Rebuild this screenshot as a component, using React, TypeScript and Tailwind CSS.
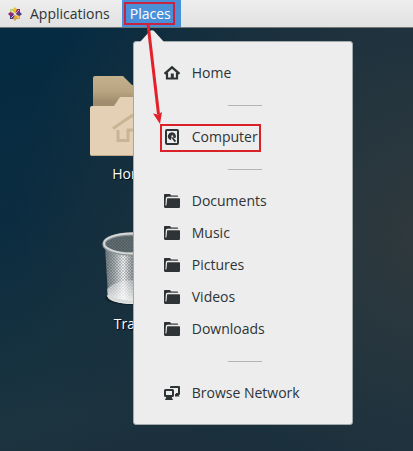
import type { ReactNode } from "react";

const icon = "h-4 w-4 shrink-0 text-[#2e3436]";

function HomeIcon() {
  return (
    <svg viewBox="0 0 16 16" className={icon} aria-hidden="true">
      <path d="M0.5 8.800 8 2.300l7.500 6.500" fill="none" stroke="currentColor" strokeWidth="2.200" />
      <path d="M3 7.500V13.500h10V7.500" fill="none" stroke="currentColor" strokeWidth="2.200" />
      <path d="M6.800 8.500h3V14h-3z" fill="currentColor" />
    </svg>
  );
}

function DiskIcon() {
  return (
    <svg viewBox="0 0 16 16" className={icon} aria-hidden="true">
      <rect x="2" y="1" width="12" height="14" rx="1" fill="none" stroke="currentColor" strokeWidth="2" />
      <path d="M8 3.200a4 4 0 0 0-2.500 7.200L7 11l.5-2.500 4 .5A4 4 0 0 0 8 3.200z" fill="currentColor" />
      <circle cx="8.300" cy="7.200" r="1" fill="#ededed" />
      <path d="M8.600 9 11.400 12.600" stroke="currentColor" strokeWidth="1.800" />
    </svg>
  );
}

function FolderIcon() {
  return (
    <svg viewBox="0 0 16 16" className={icon} aria-hidden="true">
      <path d="M1 1h5l1.200 1.500H13c.7 0 1.200.5 1.200 1.300H3.500C2.500 3.800 2 4.500 2 5.500V14L0 13V2c0-.6.400-1 1-1z" fill="currentColor" />
      <path d="M4 5.200h11c.7 0 1 .4 1 1v7.300c0 1-.5 1.500-1.300 1.500H1.500C.5 15 0 14.300 0 13.500V12h2.200L3 6.200c.1-.7.300-1 1-1z" fill="currentColor" />
      <path d="M1.800 12.500 2.300 5.500Q2.500 4.400 4 4.400h10" fill="none" stroke="#ededed" strokeWidth=".8" />
    </svg>
  );
}

function NetworkIcon() {
  return (
    <svg viewBox="0 0 16 16" className={icon} aria-hidden="true">
      <path d="M7 3V2h8v7h-3" fill="none" stroke="currentColor" strokeWidth="2" strokeLinejoin="round" />
      <path d="M11 9h3l1.500 2.500H11z" fill="currentColor" />
      <rect x="1" y="5" width="8" height="6" rx=".5" fill="none" stroke="currentColor" strokeWidth="2" />
      <path d="M2.500 11.500h5l1.500 3.500H1z" fill="currentColor" />
    </svg>
  );
}

function CentosLogo() {
  return (
    <svg viewBox="0 0 14 14" className="h-3.5 w-3.5 shrink-0" aria-hidden="true">
      <path d="M2 2h4.600v4.600H2z" fill="#b9cf6a" />
      <path d="M7.400 2H12v4.600H7.400z" fill="#932279" />
      <path d="M7.400 7.400H12V12H7.400z" fill="#efa724" />
      <path d="M2 7.400h4.600V12H2z" fill="#4a3a86" />
      <path d="M7 0l2 2.200-2 4.300-2-4.300z" fill="#efc02c" />
      <path d="M14 7l-2.200 2-4.300-2 4.300-2z" fill="#4a4188" />
      <path d="M7 14l-2-2.200 2-4.300 2 4.300z" fill="#d9a548" />
      <path d="M0 7l2.200-2 4.300 2-4.300 2z" fill="#932279" />
      <path d="M3 3l8 8M11 3l-8 8" stroke="#eeeeee" strokeWidth=".7" />
    </svg>
  );
}

function HomeFolder() {
  return (
    <svg viewBox="0 0 84 80" className="h-20 w-[84px]" aria-hidden="true">
      <defs>
        <linearGradient id="back" x1="0" y1="0" x2="0" y2="1">
          <stop offset="0" stopColor="#c5b08e" />
          <stop offset=".3" stopColor="#baa582" />
          <stop offset=".5" stopColor="#a18d6d" />
        </linearGradient>
      </defs>
      <path d="M3 2q0-2 2-2h28l9 9h37q2 0 2 2v40H3z" fill="url(#back)" />
      <path d="M0 32q0-2 2-2h22l6-9h52q2 0 2 2v55q0 2-2 2H2q-2 0-2-2z" fill="#e4d1b5" />
      <path d="M1 79.500h82" stroke="#bea98a" />
      <path d="M23 52.500 42 39.500 61 52.500M28 54v10.500h10V54h8v10.500h10V54" fill="none" stroke="#c8b595" strokeWidth="3" />
    </svg>
  );
}

function TrashCan() {
  return (
    <svg viewBox="0 0 60 74" className="h-[74px] w-[60px]" aria-hidden="true">
      <defs>
        <linearGradient id="metal">
          <stop offset="0" stopColor="#6f7b80" />
          <stop offset=".17" stopColor="#a5abac" />
          <stop offset=".34" stopColor="#f4f5f5" />
          <stop offset=".5" stopColor="#9ba1a2" />
          <stop offset="1" stopColor="#c6c9ca" />
        </linearGradient>
        <linearGradient id="floor" x1="0" y1="0" x2="0" y2="1">
          <stop offset="0" stopColor="#fff" stopOpacity=".3" />
          <stop offset="1" stopColor="#fff" stopOpacity=".85" />
        </linearGradient>
        <pattern id="mesh" width="3" height="3" patternUnits="userSpaceOnUse">
          <path d="M0 0l3 3M3 0 0 3" stroke="#39454b" strokeWidth=".5" opacity=".55" />
        </pattern>
      </defs>
      <ellipse cx="30" cy="66" rx="27" ry="7" fill="#0c1a21" opacity=".6" />
      <path d="M3 13 6 64q2 7 24 8 22-1 24-8l3-51z" fill="url(#metal)" />
      <path d="M3 13 6 64q2 7 24 8 22-1 24-8l3-51z" fill="url(#mesh)" />
      <path d="M5 57q7-8 25-9 18 1 25 9l-1 9q-4 5-24 6-20-1-24-6z" fill="url(#floor)" />
      <path d="M6 63q3 6 24 7 21-1 24-7" fill="none" stroke="#d9dbdb" strokeWidth="3" />
      <ellipse cx="30" cy="12" rx="28" ry="9.500" fill="#606c70" />
      <ellipse cx="30" cy="12" rx="28" ry="9.500" fill="url(#mesh)" />
      <ellipse cx="30" cy="12" rx="28" ry="10" fill="none" stroke="#8b9192" strokeWidth="3.500" />
      <ellipse cx="30" cy="11.500" rx="28" ry="10" fill="none" stroke="#d5d8d8" strokeWidth="1.800" />
    </svg>
  );
}

function MenuItem({ icon, children, marked = false }: { icon: ReactNode; children: string; marked?: boolean }) {
  return (
    <li className="relative">
      <button type="button" role="menuitem" className="flex h-8 w-full items-center gap-3 px-[30px] text-left">
        {icon}
        <span>{children}</span>
      </button>
      {marked && (
        <span className="pointer-events-none absolute top-[3px] left-[26px] h-7 w-[101px] border-2 border-[#db2128]" />
      )}
    </li>
  );
}

function Separator() {
  return (
    <li role="separator" className="flex h-8 items-center justify-center pl-1">
      <span className="h-px w-[34px] bg-[#b4b6b6]" />
    </li>
  );
}

function DesktopIcon({ label, children }: { label: string; children: ReactNode }) {
  return (
    <div className="flex w-24 flex-col items-center gap-2 text-white [text-shadow:1px_1px_1px_#000]">
      {children}
      <span className="leading-5">{label}</span>
    </div>
  );
}

export default function App() {
  return (
    <div className="relative flex min-h-screen flex-col overflow-hidden bg-[radial-gradient(circle_at_105%_52%,#30393d_0%,#25353e_28%,#1b303d_52%,transparent_85%),linear-gradient(165deg,#032b42_0%,#0b2c40_40%,#1c343f_78%,#192936_100%)] font-['Open_Sans','Noto_Sans',sans-serif] text-sm text-[#2e3436]">
      <header className="flex h-7 items-stretch border-b border-[#727778] bg-linear-to-b from-[#eeeeee] to-[#e1e1e1]">
        <button type="button" className="flex items-center gap-2 pr-3 pl-2">
          <CentosLogo />
          <span>Applications</span>
        </button>
        <div className="relative flex">
          <button type="button" aria-expanded="true" className="flex items-center bg-[#4a90d9] pr-2.5 pl-2 text-white">
            Places
          </button>
          <span className="pointer-events-none absolute top-0.5 left-0.5 h-[23px] w-[51px] border-2 border-[#c9243f]" />
          <div className="absolute top-[41px] left-[11px] z-10 w-[220px] rounded-[3px] border border-[#a2a9ab] bg-[#ededed]">
            <svg viewBox="0 0 24 12" className="absolute -top-3 left-1.5 h-3 w-6" aria-hidden="true">
              <path d="M0 12 9.500 1.500Q12 -1 14.500 1.500L24 12z" fill="#ededed" />
            </svg>
            <ul role="menu" className="py-[15px]">
              <MenuItem icon={<HomeIcon />}>Home</MenuItem>
              <Separator />
              <MenuItem icon={<DiskIcon />} marked>Computer</MenuItem>
              <Separator />
              <MenuItem icon={<FolderIcon />}>Documents</MenuItem>
              <MenuItem icon={<FolderIcon />}>Music</MenuItem>
              <MenuItem icon={<FolderIcon />}>Pictures</MenuItem>
              <MenuItem icon={<FolderIcon />}>Videos</MenuItem>
              <MenuItem icon={<FolderIcon />}>Downloads</MenuItem>
              <Separator />
              <MenuItem icon={<NetworkIcon />}>Browse Network</MenuItem>
            </ul>
          </div>
          <svg viewBox="0 0 20 100" className="pointer-events-none absolute top-6 left-5 z-20 h-[100px] w-5" aria-hidden="true">
            <path d="M6 0 16.500 90" stroke="#e3212a" strokeWidth="3" />
            <path d="M11 89.500l5 1 4-2.500L18 100z" fill="#e3212a" />
          </svg>
        </div>
      </header>
      <main className="flex flex-1 flex-col gap-12 pt-12 pl-[84px]">
        <DesktopIcon label="Home">
          <HomeFolder />
        </DesktopIcon>
        <DesktopIcon label="Trash">
          <TrashCan />
        </DesktopIcon>
      </main>
    </div>
  );
}
